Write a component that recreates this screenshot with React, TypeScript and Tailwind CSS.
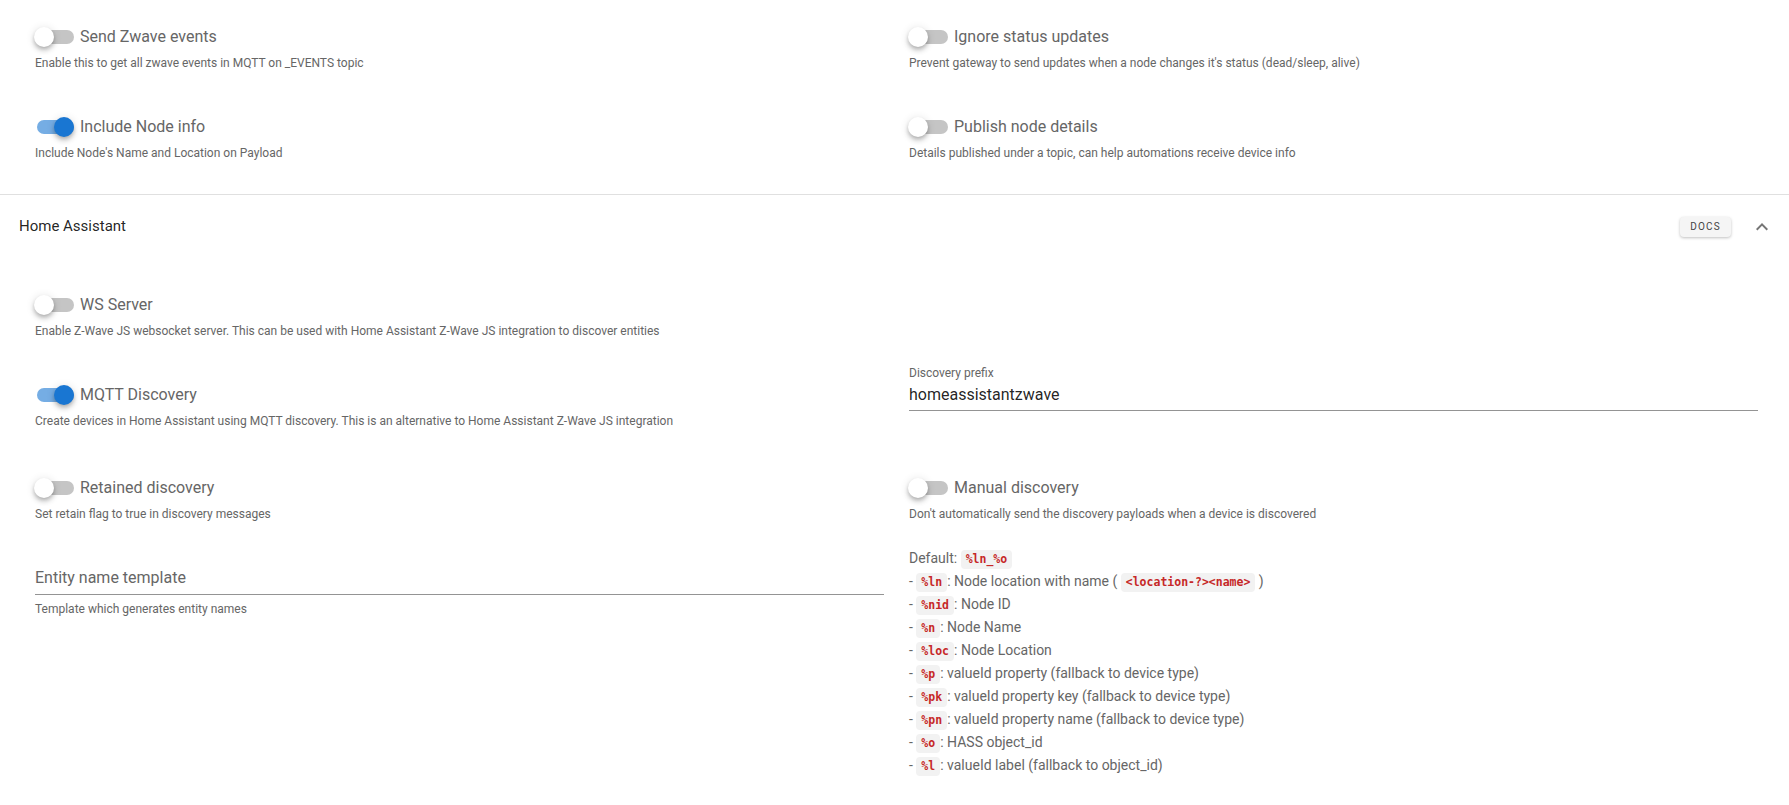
import React from "react";

const Toggle: React.FC<{ on?: boolean }> = ({ on }) => (
  <div className="relative w-[40px] h-6 shrink-0">
    <div
      className={`absolute left-[2px] top-[5px] w-[37px] h-[14px] rounded-full ${
        on ? "bg-[#75ade4]" : "bg-[#c5c5c5]"
      }`}
    />
    <div
      className={`absolute top-[2px] w-5 h-5 rounded-full shadow-[0_2px_4px_-1px_rgba(0,0,0,0.2),0_4px_5px_0_rgba(0,0,0,0.14),0_1px_10px_0_rgba(0,0,0,0.12)] ${
        on ? "left-[19px] bg-[#1976d2]" : "left-[-1px] bg-white"
      }`}
    />
  </div>
);

const SwitchField: React.FC<{
  label: string;
  hint: string;
  on?: boolean;
  className?: string;
}> = ({ label, hint, on, className }) => (
  <div className={className}>
    <div className="flex items-center h-6">
      <Toggle on={on} />
      <span className="ml-[5px] text-base text-[#666]">{label}</span>
    </div>
    <div className="mt-[7px] text-xs leading-[14px] text-[#666]">{hint}</div>
  </div>
);

const Code: React.FC<{ children: React.ReactNode }> = ({ children }) => (
  <code className="inline-block h-[19px] leading-[19px] px-[5px] rounded-[4px] bg-[#f2f2f2] text-[#c62828] font-bold text-[11.5px] font-['DejaVu_Sans_Mono',monospace] align-middle">
    {children}
  </code>
);

const placeholders: [string, string][] = [
  ["%ln", "Node location with name ("],
  ["%nid", "Node ID"],
  ["%n", "Node Name"],
  ["%loc", "Node Location"],
  ["%p", "valueId property (fallback to device type)"],
  ["%pk", "valueId property key (fallback to device type)"],
  ["%pn", "valueId property name (fallback to device type)"],
  ["%o", "HASS object_id"],
  ["%l", "valueId label (fallback to object_id)"],
];

const App: React.FC = () => {
  return (
    <div className="w-[1789px] h-[805px] bg-white overflow-hidden font-['Roboto',sans-serif]">
      {/* previous panel content */}
      <div className="pl-[35px] pr-[31px] pt-[25px] pb-[34px] border-b border-[#e0e0e0]">
        <div className="grid grid-cols-2 gap-x-[25px]">
          <SwitchField
            label="Send Zwave events"
            hint="Enable this to get all zwave events in MQTT on _EVENTS topic"
          />
          <SwitchField
            label="Ignore status updates"
            hint="Prevent gateway to send updates when a node changes it's status (dead/sleep, alive)"
          />
        </div>
        <div className="grid grid-cols-2 gap-x-[25px] mt-[45px]">
          <SwitchField
            on
            label="Include Node info"
            hint="Include Node's Name and Location on Payload"
          />
          <SwitchField
            label="Publish node details"
            hint="Details published under a topic, can help automations receive device info"
          />
        </div>
      </div>

      {/* Home Assistant header */}
      <div className="flex items-center h-[63px] pl-[19px] pr-[15px]">
        <span className="flex-1 text-[15px] text-[rgba(0,0,0,0.87)]">
          Home Assistant
        </span>
        <button className="w-[51px] h-[20px] rounded-[4px] bg-[#f5f5f5] shadow-[0_1px_3px_rgba(0,0,0,0.25)] text-[10px] font-normal tracking-[0.12em] text-[#444]">
          DOCS
        </button>
        <svg viewBox="0 0 24 24" className="w-6 h-6 ml-[19px] fill-[#757575]">
          <path d="M7.41,15.41L12,10.83L16.59,15.41L18,14L12,8L6,14L7.41,15.41Z" />
        </svg>
      </div>

      {/* Home Assistant content */}
      <div className="pl-[35px] pr-[31px] pt-[35px]">
        <div className="grid grid-cols-2 gap-x-[25px]">
          <SwitchField
            label="WS Server"
            hint="Enable Z-Wave JS websocket server. This can be used with Home Assistant Z-Wave JS integration to discover entities"
          />
          <div />
        </div>

        <div className="grid grid-cols-2 gap-x-[25px] mt-[28px] items-start">
          <SwitchField
            on
            className="mt-[17px]"
            label="MQTT Discovery"
            hint="Create devices in Home Assistant using MQTT discovery. This is an alternative to Home Assistant Z-Wave JS integration"
          />
          <div>
            <div className="text-xs leading-[14px] text-[#666]">
              Discovery prefix
            </div>
            <div className="mt-[3px] text-base leading-[24px] pb-[3px] text-[rgba(0,0,0,0.87)] border-b border-[#949494]">
              homeassistantzwave
            </div>
          </div>
        </div>

        <div className="grid grid-cols-2 gap-x-[25px] mt-[48px]">
          <SwitchField
            label="Retained discovery"
            hint="Set retain flag to true in discovery messages"
          />
          <SwitchField
            label="Manual discovery"
            hint="Don't automatically send the discovery payloads when a device is discovered"
          />
        </div>

        <div className="grid grid-cols-2 gap-x-[25px] mt-[26px] items-start">
          <div className="mt-[19px]">
            <div className="text-base leading-[24px] pb-[4px] text-[#666] border-b border-[#949494]">
              Entity name template
            </div>
            <div className="mt-[7px] text-xs leading-[14px] text-[#666]">
              Template which generates entity names
            </div>
          </div>
          <div className="text-sm leading-[23px] text-[#666]">
            <div>
              Default: <Code>%ln_%o</Code>
            </div>
            {placeholders.map(([code, text]) => (
              <div key={code}>
                - <Code>{code}</Code>: {text}
                {code === "%ln" && (
                  <>
                    {" "}
                    <Code>{"<location-?><name>"}</Code> )
                  </>
                )}
              </div>
            ))}
          </div>
        </div>
      </div>
    </div>
  );
};

export default App;
